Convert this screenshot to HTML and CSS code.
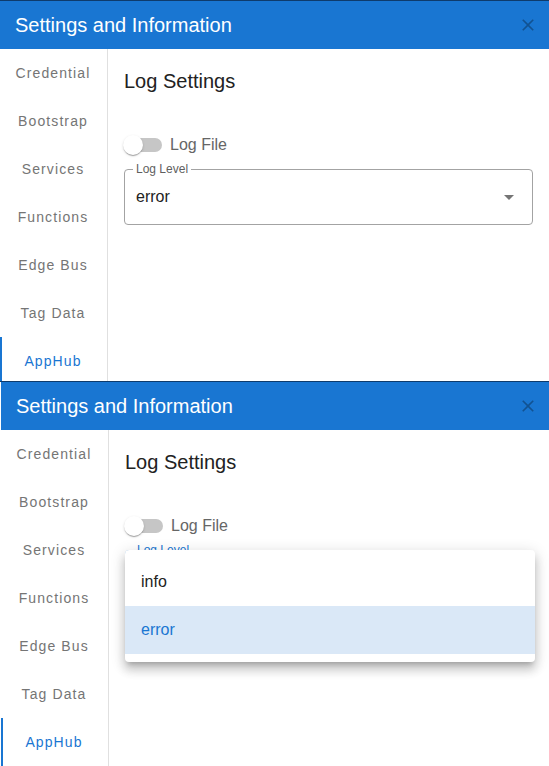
FILE: index.html
```html
<!DOCTYPE html>
<html lang="en">
<head>
<meta charset="utf-8">
<title>Settings and Information</title>
<link rel="stylesheet" href="styles.css">
</head>
<body>
<section class="dialog">
  <header class="dialog-header">
    <h1 class="dialog-title">Settings and Information</h1>
    <button class="close-btn" aria-label="Close">
      <svg viewBox="0 0 24 24" width="20" height="20"><path d="M19 6.41L17.59 5 12 10.59 6.41 5 5 6.41 10.59 12 5 17.59 6.41 19 12 13.41 17.59 19 19 17.59 13.41 12z"/></svg>
    </button>
  </header>
  <div class="dialog-body">
    <nav class="tabs">
      <div class="tab">Credential</div>
      <div class="tab">Bootstrap</div>
      <div class="tab">Services</div>
      <div class="tab">Functions</div>
      <div class="tab">Edge Bus</div>
      <div class="tab">Tag Data</div>
      <div class="tab tab-active">AppHub</div>
    </nav>
    <main class="panel">
      <h2 class="panel-title">Log Settings</h2>
      <div class="switch-row">
        <span class="switch"><span class="switch-thumb"></span></span>
        <span class="switch-label">Log File</span>
      </div>
      <div class="select">
        <span class="select-label">Log Level</span>
        <div class="select-value">
          <span>error</span>
          <svg class="select-arrow" viewBox="0 0 24 24" width="24" height="24"><path d="M7 10l5 5 5-5z"/></svg>
        </div>
      </div>
    </main>
  </div>
</section>

<section class="dialog dialog-second">
  <header class="dialog-header">
    <h1 class="dialog-title">Settings and Information</h1>
    <button class="close-btn" aria-label="Close">
      <svg viewBox="0 0 24 24" width="20" height="20"><path d="M19 6.41L17.59 5 12 10.59 6.41 5 5 6.41 10.59 12 5 17.59 6.41 19 12 13.41 17.59 19 19 17.59 13.41 12z"/></svg>
    </button>
  </header>
  <div class="dialog-body">
    <nav class="tabs">
      <div class="tab">Credential</div>
      <div class="tab">Bootstrap</div>
      <div class="tab">Services</div>
      <div class="tab">Functions</div>
      <div class="tab">Edge Bus</div>
      <div class="tab">Tag Data</div>
      <div class="tab tab-active">AppHub</div>
    </nav>
    <main class="panel">
      <h2 class="panel-title">Log Settings</h2>
      <div class="switch-row">
        <span class="switch"><span class="switch-thumb"></span></span>
        <span class="switch-label">Log File</span>
      </div>
      <div class="select select-open">
        <span class="select-label">Log Level</span>
        <div class="select-value">
          <span>error</span>
          <svg class="select-arrow" viewBox="0 0 24 24" width="24" height="24"><path d="M7 10l5 5 5-5z"/></svg>
        </div>
        <ul class="menu">
          <li class="menu-item">info</li>
          <li class="menu-item menu-item-selected">error</li>
        </ul>
      </div>
    </main>
  </div>
</section>
</body>
</html>
```

FILE: styles.css
```css
* { box-sizing: border-box; }

html, body {
  margin: 0;
  padding: 0;
  background: #ffffff;
}

body {
  width: 549px;
  font-family: "Liberation Sans", Arial, sans-serif;
  color: #222222;
}

.dialog {
  height: 381px;
  overflow: hidden;
  border-top: 1px solid #0e3b6c;
  display: flex;
  flex-direction: column;
  background: #ffffff;
}

.dialog-second {
  height: 385px;
  padding-left: 1px;
}

.dialog-header {
  flex: 0 0 48px;
  height: 48px;
  background: #1976d2;
  display: flex;
  align-items: center;
  justify-content: space-between;
  padding: 0 11px 0 15px;
}

.dialog-title {
  margin: 0;
  font-size: 20px;
  font-weight: 400;
  line-height: 24px;
  color: #ffffff;
}

.close-btn {
  border: 0;
  background: transparent;
  padding: 0;
  width: 20px;
  height: 20px;
  display: flex;
  align-items: center;
  justify-content: center;
  cursor: pointer;
}

.close-btn svg {
  fill: rgba(0, 0, 0, 0.3);
  display: block;
}

.dialog-body {
  flex: 1 1 auto;
  display: flex;
  min-height: 0;
}

.tabs {
  flex: 0 0 108px;
  width: 108px;
  border-right: 1px solid #e0e0e0;
  display: flex;
  flex-direction: column;
}

.tab {
  flex: 0 0 48px;
  height: 48px;
  display: flex;
  align-items: center;
  justify-content: center;
  font-size: 14px;
  letter-spacing: 1.1px;
  color: #757575;
  padding-right: 1px;
}

.tab-active {
  color: #1976d2;
  box-shadow: inset 2px 0 0 #1976d2;
}

.panel {
  flex: 1 1 auto;
  padding: 20px 16px 0 16px;
  display: flex;
  flex-direction: column;
}

.panel-title {
  margin: 0;
  font-size: 20px;
  font-weight: 400;
  line-height: 24px;
  color: #222222;
}

.switch-row {
  margin-top: 33px;
  height: 38px;
  display: flex;
  align-items: center;
}

.switch {
  position: relative;
  width: 34px;
  height: 14px;
  border-radius: 7px;
  background: #c6c6c6;
  margin: 0 8px 0 4px;
}

.switch-thumb {
  position: absolute;
  left: -5px;
  top: -3px;
  width: 20px;
  height: 20px;
  border-radius: 50%;
  background: #ffffff;
  box-shadow: 0 2px 1px -1px rgba(0,0,0,0.2), 0 1px 1px 0 rgba(0,0,0,0.14), 0 1px 3px 0 rgba(0,0,0,0.12);
}

.switch-label {
  font-size: 16px;
  color: #666666;
}

.select {
  position: relative;
  margin-top: 5px;
  height: 56px;
  border: 1px solid #a3a3a3;
  border-radius: 4px;
}

.select-open {
  border-color: #1976d2;
}

.select-label {
  position: absolute;
  left: 8px;
  top: -7px;
  padding: 0 3px;
  background: #ffffff;
  font-size: 12px;
  line-height: 12px;
  color: #5f5f5f;
}

.select-open .select-label {
  color: #1976d2;
}

.select-value {
  height: 54px;
  display: flex;
  align-items: center;
  justify-content: space-between;
  padding: 0 11px 0 11px;
  font-size: 16px;
  color: #222222;
}

.select-arrow {
  fill: #757575;
  display: block;
}

.menu {
  position: absolute;
  left: -1px;
  top: -1px;
  width: 410px;
  margin: 0;
  padding: 8px 0;
  list-style: none;
  background: #ffffff;
  border-radius: 4px;
  box-shadow: 0 5px 5px -3px rgba(0,0,0,0.2), 0 8px 10px 1px rgba(0,0,0,0.14), 0 3px 14px 2px rgba(0,0,0,0.12);
  z-index: 10;
}

.menu-item {
  height: 48px;
  display: flex;
  align-items: center;
  padding-left: 16px;
  font-size: 16px;
  color: #222222;
}

.menu-item-selected {
  background: #dae8f7;
  color: #1976d2;
}
```
